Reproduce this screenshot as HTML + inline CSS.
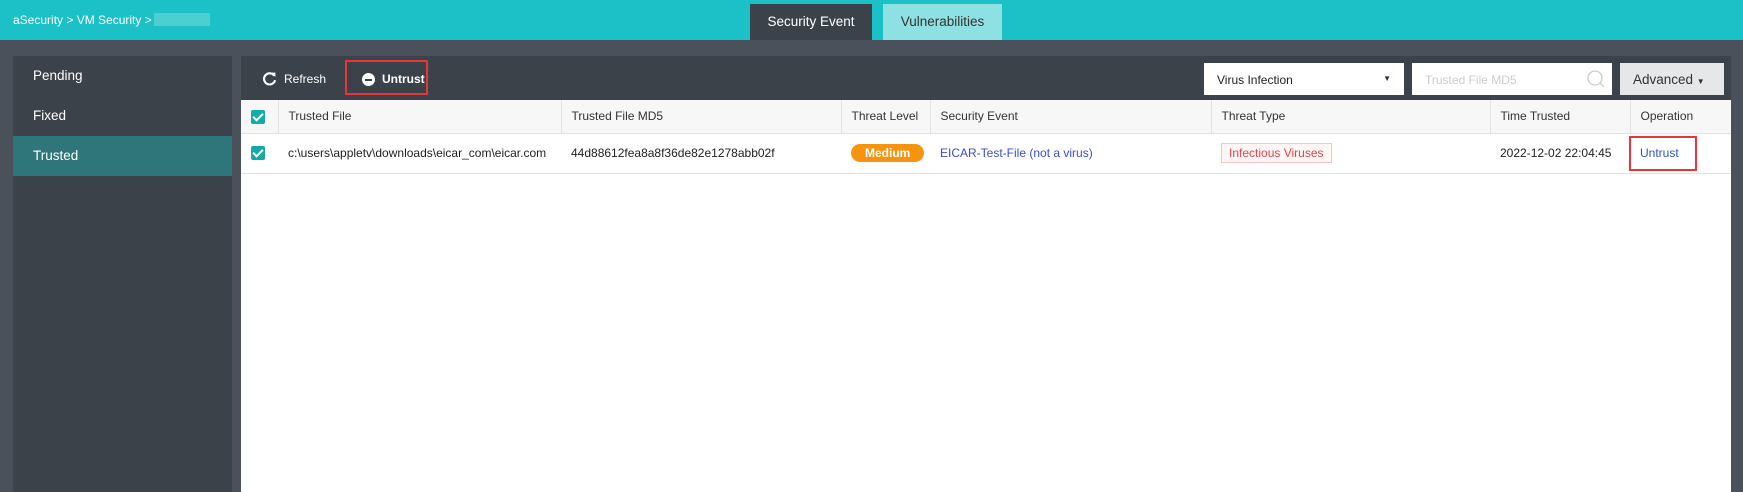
<!DOCTYPE html>
<html><head><meta charset="utf-8"><style>
*{margin:0;padding:0;box-sizing:border-box}
body{width:1743px;height:492px;background:#4a515b;font-family:"Liberation Sans",Arial,sans-serif;font-size:12px;position:relative;overflow:hidden;color:#222}
.top{position:absolute;left:0;top:0;width:1743px;height:40px;background:#1bc1c6}
.bc{position:absolute;left:13px;top:13px;color:#fff;font-size:12px}
.blur{position:absolute;left:154px;top:13px;width:56px;height:13px;background:#5fd4d6;opacity:.7}
.tab{position:absolute;top:4px;height:36px;line-height:36px;text-align:center;font-size:13.5px}
.side{position:absolute;left:13px;top:56px;width:219px;height:436px;background:#3c424a}
.side div{height:40px;line-height:40px;padding-left:20px;color:#fff;font-size:13.5px}
.main{position:absolute;left:241px;top:56px;width:1490px;height:436px;background:#fff}
.tb{height:44px;background:#3c424a;position:relative}
.abs{position:absolute}
table{border-collapse:collapse;width:1490px;table-layout:fixed}
th{height:33px;background:#f7f7f7;font-weight:normal;text-align:left;padding-left:10px;border-right:1px solid #e2e2e2;border-bottom:1px solid #e2e2e2;color:#333}
td{height:40px;padding-left:10px;border-bottom:1px solid #e2e2e2;white-space:nowrap}
.cb{display:inline-block;width:14px;height:14px;background:#15a9a9;border-radius:2px;position:relative;vertical-align:middle}
.cb:after{content:"";position:absolute;left:4px;top:1px;width:4px;height:8px;border:solid #fff;border-width:0 2px 2px 0;transform:rotate(45deg)}
</style></head><body>
<div class="top"><div class="bc">aSecurity &gt; VM Security &gt;</div><div class="blur"></div>
<div class="tab" style="left:750px;width:122px;background:#3c424a;color:#fff">Security Event</div>
<div class="tab" style="left:883px;width:119px;background:#8de1e2;color:#333">Vulnerabilities</div></div>
<div class="side"><div>Pending</div><div>Fixed</div><div style="background:#2e7679">Trusted</div></div>
<div class="main">
<div class="tb">
<svg class="abs" style="left:21px;top:15px" width="15" height="15" viewBox="0 0 14 14"><path d="M11.5 4.5A5.2 5.2 0 1 0 12.2 8.5" fill="none" stroke="#fff" stroke-width="2"/><path d="M8.5 1.5L12.5 1.5 12.5 5.5Z" fill="#fff"/></svg>
<span class="abs" style="left:43px;top:16px;color:#fff;font-size:12px">Refresh</span>
<div class="abs" style="left:104px;top:4px;width:83px;height:35px;border:2px solid #e8343a"></div>
<div class="abs" style="left:121px;top:17px;width:13px;height:13px;border-radius:50%;background:#fff"><div style="margin:5.5px 3px;height:2px;background:#3c424a"></div></div>
<span class="abs" style="left:141px;top:16px;color:#fff;font-weight:bold;font-size:12px">Untrust</span>
<div class="abs" style="left:963px;top:7px;width:200px;height:32px;background:#fff;padding:10px 13px;font-size:12px">Virus Infection<span style="position:absolute;right:13px;top:11px;font-size:8px;color:#333">▼</span></div>
<div class="abs" style="left:1171px;top:7px;width:200px;height:32px;background:#fff;padding:10px 13px;color:#ccc;font-size:12px">Trusted File MD5
<svg style="position:absolute;right:6px;top:6px" width="20" height="20"><circle cx="9" cy="9" r="7" fill="none" stroke="#ccc" stroke-width="1.3"/><path d="M14 14L18 18" stroke="#ccc" stroke-width="1.3"/></svg></div>
<div class="abs" style="left:1379px;top:7px;width:104px;height:32px;background:#e6e7e9;padding:9px 13px;color:#333;font-size:13.5px">Advanced <span style="font-size:8px">▼</span></div>
</div>
<table>
<colgroup><col style="width:37px"><col style="width:283px"><col style="width:280px"><col style="width:89px"><col style="width:281px"><col style="width:279px"><col style="width:140px"><col style="width:101px"></colgroup>
<tr><th><span class="cb"></span></th><th>Trusted File</th><th>Trusted File MD5</th><th>Threat Level</th><th>Security Event</th><th>Threat Type</th><th>Time Trusted</th><th style="border-right:none">Operation</th></tr>
<tr><td><span class="cb"></span></td><td>c:\users\appletv\downloads\eicar_com\eicar.com</td><td>44d88612fea8a8f36de82e1278abb02f</td>
<td><span style="display:inline-block;background:#f7940f;color:#fff;font-weight:bold;border-radius:10px;padding:2px 14px">Medium</span></td>
<td style="color:#3a4fd1">EICAR-Test-File (not a virus)</td>
<td><span style="border:1px solid #f5c6c8;color:#e9414a;padding:2px 7px;background:#fff6f6">Infectious Viruses</span></td>
<td>2022-12-02 22:04:45</td>
<td style="position:relative;padding-left:10px;color:#2f54c0"><span style="position:absolute;left:-1px;top:2px;width:68px;height:35px;border:2px solid #e8343a"></span>Untrust</td></tr>
</table>
</div>
</body></html>
